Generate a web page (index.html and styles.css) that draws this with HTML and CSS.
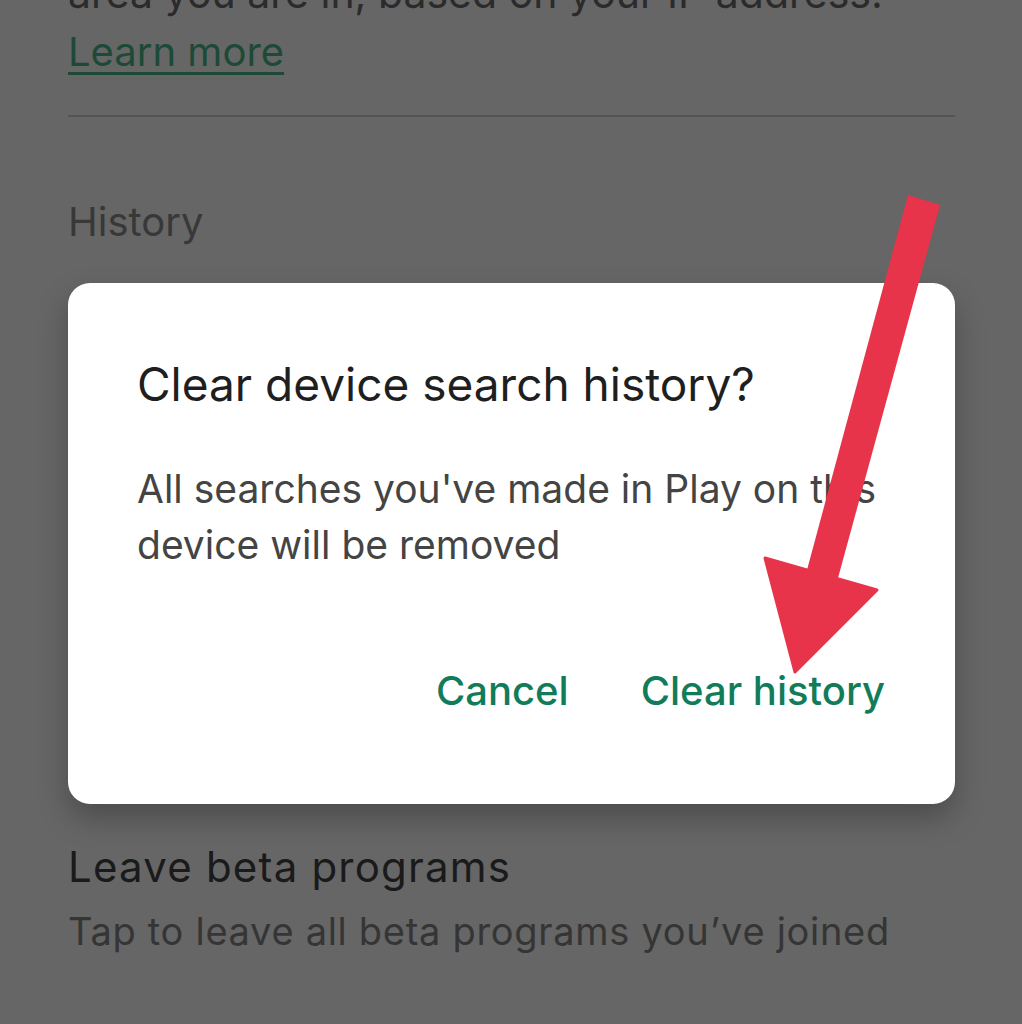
FILE: index.html
```html
<!DOCTYPE html>
<html lang="en">
<head>
<meta charset="utf-8">
<title>Clear device search history</title>
<link rel="stylesheet" href="styles.css">
</head>
<body>
<div class="screen">
  <div class="settings">
    <p class="cut">area you are in, based on your IP address.</p>
    <a class="learn" href="#">Learn more</a>
    <hr class="divider">
    <h2 class="section">History</h2>
    <div class="item">
      <div class="item-title">Leave beta programs</div>
      <div class="item-sub">Tap to leave all beta programs you’ve joined</div>
    </div>
  </div>

  <div class="dialog">
    <h1 class="dialog-title">Clear device search history?</h1>
    <p class="dialog-body">All searches you've made in Play on this device will be removed</p>
    <div class="dialog-actions">
      <button class="btn">Cancel</button>
      <button class="btn">Clear history</button>
    </div>
  </div>

  <svg class="arrow" width="1022" height="1024" viewBox="0 0 1022 1024">
    <polygon points="908,195 940,205 838,578 807,570" fill="#e8344a"/>
    <polygon points="765,558 877,590 795,672" fill="#e8344a" stroke="#e8344a" stroke-width="3" stroke-linejoin="round"/>
  </svg>
</div>
</body>
</html>
```

FILE: styles.css
```css
* { box-sizing: border-box; }
html, body { margin: 0; padding: 0; }
body {
  background: #666666;
  font-family: Inter, Roboto, "Liberation Sans", sans-serif;
}
.screen {
  position: relative;
  width: 1022px;
  height: 1024px;
  overflow: hidden;
  background: #666666;
}
.settings {
  display: flex;
  flex-direction: column;
  align-items: flex-start;
  padding: 0 67px 0 68px;
}
.cut {
  margin: -31px 0 0;
  font-size: 41px;
  line-height: 48px;
  color: #2b2b2b;
  white-space: nowrap;
}
.learn {
  margin-top: 11px;
  font-size: 40px;
  line-height: 48px;
  color: #1c4a36;
  text-decoration: underline;
  text-decoration-thickness: 3px;
  text-underline-offset: 6px;
}
.divider {
  align-self: stretch;
  margin: 39px 0 0;
  border: 0;
  height: 2px;
  background: #545454;
}
.section {
  margin: 81px 0 0;
  font-size: 40px;
  line-height: 48px;
  font-weight: 400;
  color: #383838;
}
.item {
  display: flex;
  flex-direction: column;
  margin-top: 593px;
}
.item-title {
  font-size: 42px;
  line-height: 56px;
  letter-spacing: 1.2px;
  color: #1a1a1a;
}
.item-sub {
  margin-top: 12px;
  font-size: 38px;
  line-height: 48px;
  letter-spacing: 0.7px;
  color: #353535;
}
.dialog {
  position: absolute;
  left: 68px;
  top: 283px;
  width: 887px;
  height: 521px;
  background: #ffffff;
  border-radius: 22px;
  box-shadow: 0 14px 30px rgba(0, 0, 0, 0.26);
  padding: 73px 70px 0 69px;
  display: flex;
  flex-direction: column;
}
.dialog-title {
  margin: 0;
  font-size: 46px;
  line-height: 56px;
  font-weight: 400;
  color: #1f1f1f;
  white-space: nowrap;
}
.dialog-body {
  margin: 49px 0 0;
  font-size: 39px;
  line-height: 56px;
  color: #444444;
}
.dialog-actions {
  display: flex;
  justify-content: flex-end;
  gap: 72px;
  margin-top: 94px;
}
.btn {
  background: none;
  border: 0;
  padding: 0;
  font-family: inherit;
  font-size: 40px;
  line-height: 48px;
  font-weight: 500;
  color: #127c5a;
}
.arrow {
  position: absolute;
  left: 0;
  top: 0;
  pointer-events: none;
}
```
